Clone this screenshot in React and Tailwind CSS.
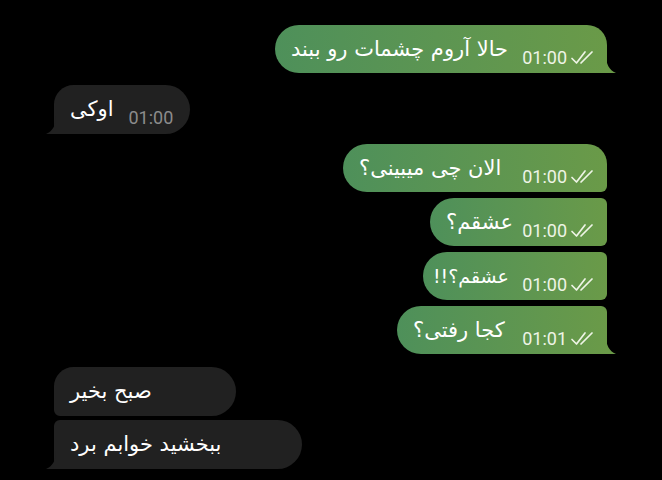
const fa = { fontFamily: '"DejaVu Sans", "Noto Sans", sans-serif' };

const outgoing = [
  { id: 1, text: "حالا آروم چشمات رو ببند", time: "01:00", w: "w-[332px]", round: "rounded-l-[24px] rounded-tr-[20px]", tail: true, mt: "mt-[25px]" },
  { id: 3, text: "الان چی میبینی؟", time: "01:00", w: "w-[264px]", round: "rounded-l-[24px] rounded-tr-[20px] rounded-br-[6px]", mt: "mt-[10px]" },
  { id: 4, text: "عشقم؟", time: "01:00", w: "w-[177px]", round: "rounded-l-[24px] rounded-r-[6px]", mt: "mt-[6px]" },
  { id: 5, text: "عشقم؟!!", time: "01:00", w: "w-[184px]", round: "rounded-l-[24px] rounded-r-[6px]", mt: "mt-[6px]", size: "text-[19px]", pl: "pl-[10px]" },
  { id: 6, text: "کجا رفتی؟", time: "01:01", w: "w-[210px]", round: "rounded-l-[24px] rounded-tr-[6px]", tail: true, mt: "mt-[6px]" },
];

// ✓✓ telegram read mark
const Checks = () => (
  <svg width="27" height="15" viewBox="0 0 27 15" fill="none" stroke="#eef4e6" strokeWidth="1.7" strokeLinecap="round" strokeLinejoin="round">
    <path d="M2 8.5 L6.5 13 L15 2" />
    <path d="M11 13 L22 2" />
  </svg>
);

const TailRight = ({ color }) => (
  <svg className="absolute bottom-0 right-[-9px]" width="10" height="18" viewBox="0 0 10 18">
    <path d="M0 0 C0 9 3 15 10 18 L0 18 Z" fill={color} />
  </svg>
);

const TailLeft = ({ color }) => (
  <svg className="absolute bottom-0 left-[-8px]" width="10" height="18" viewBox="0 0 10 18">
    <path d="M10 0 C10 9 7 15 0 18 L10 18 Z" fill={color} />
  </svg>
);

function Out({ m }) {
  return (
    <div className={`flex justify-end pr-[55px] ${m.mt}`}>
      <div className={`relative h-[48px] ${m.w} ${m.round} ${m.tail ? "rounded-br-none" : ""} bg-gradient-to-r from-[#4e905a] to-[#6a9a48] flex items-center justify-between gap-[6px] ${m.pl || "pl-[16px]"} pr-[10px]`}>
        <span dir="rtl" className={`${m.size || "text-[21px]"} text-white leading-none whitespace-nowrap`} style={fa}>{m.text}</span>
        <span className="flex items-center gap-[3px] pt-[17px]">
          <span className="text-[18px] leading-none text-[#eef4e6] font-['Roboto']">{m.time}</span>
          <Checks />
        </span>
        {m.tail && <TailRight color="#6a9a48" />}
      </div>
    </div>
  );
}

function In({ text, time, w, round, tail, mt }) {
  return (
    <div className={`flex pl-[54px] ${mt}`}>
      <div className={`relative h-[49px] ${w} ${round} bg-[#212121] flex items-center pl-[16px]`}>
        <span dir="rtl" className="text-[21px] text-white leading-none" style={fa}>{text}</span>
        {time && <span className="ml-[15px] pt-[17px] text-[18px] leading-none text-[#8c8c8c] font-['Roboto']">{time}</span>}
        {tail && <TailLeft color="#212121" />}
      </div>
    </div>
  );
}

export default function App() {
  return (
    <div className="w-[662px] h-[480px] bg-black overflow-hidden flex flex-col">
      <Out m={outgoing[0]} />
      <In text="اوکی" time="01:00" w="w-[136px]" round="rounded-r-[25px] rounded-tl-[20px] rounded-bl-none" tail mt="mt-[12px]" />
      <Out m={outgoing[1]} />
      <Out m={outgoing[2]} />
      <Out m={outgoing[3]} />
      <Out m={outgoing[4]} />
      <In text="صبح بخیر" w="w-[182px]" round="rounded-r-[25px] rounded-tl-[20px] rounded-bl-[6px]" mt="mt-[13px]" />
      <In text="ببخشید خوابم برد" w="w-[248px]" round="rounded-r-[25px] rounded-tl-[6px] rounded-bl-none" tail mt="mt-[4px]" />
    </div>
  );
}
